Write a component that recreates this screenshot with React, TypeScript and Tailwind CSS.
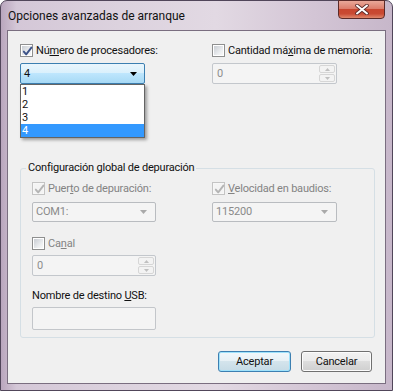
import React from "react";

function Check({ checked, disabled }: { checked?: boolean; disabled?: boolean }) {
  return (
    <span
      className={
        disabled
          ? "relative w-[13px] h-[13px] border border-[#c4c4c4] bg-[#f7f7f7] flex items-center justify-center shrink-0"
          : "relative w-[13px] h-[13px] border border-[#8e8f8f] bg-white flex items-center justify-center shrink-0"
      }
    >
      <span
        className={
          disabled
            ? "w-[9px] h-[9px] bg-[#f4f4f4]"
            : "w-[9px] h-[9px] bg-[linear-gradient(135deg,#c9cdd3_0%,#eef0f2_70%,#f8f8f8_100%)]"
        }
      />
      {checked && (
        <svg className="absolute left-[1px] top-[1px]" width="11" height="11" viewBox="0 0 11 11">
          <path
            d="M1.8 5.6 L4.2 8.4 L9.4 1.6"
            fill="none"
            stroke={disabled ? "#b4b4b4" : "#3c5288"}
            strokeWidth="1.9"
            strokeLinecap="round"
            strokeLinejoin="round"
          />
        </svg>
      )}
    </span>
  );
}

function Arrow({ color }: { color: string }) {
  return (
    <svg width="8" height="4" viewBox="0 0 8 4">
      <path d="M0 0 H7 L3.5 4 Z" fill={color} />
    </svg>
  );
}

function Spin({ value }: { value: string }) {
  return (
    <div className="h-[21px] border border-[#c3c7cc] rounded-[2px] bg-[#f4f4f4] flex items-center">
      <span className="pl-[4px] text-[#8d8d8d] flex-1 leading-[16px]">{value}</span>
      <div className="flex flex-col w-[17px] h-full py-[1px] pr-[1px] gap-[1px]">
        <div className="flex-1 border border-[#d6d6d6] rounded-[2px] bg-[#f3f3f3] flex items-center justify-center">
          <svg width="5" height="3" viewBox="0 0 5 3">
            <path d="M0 3 L2.5 0 L5 3 Z" fill="#c0c0c0" />
          </svg>
        </div>
        <div className="flex-1 border border-[#d6d6d6] rounded-[2px] bg-[#f3f3f3] flex items-center justify-center">
          <svg width="5" height="3" viewBox="0 0 5 3">
            <path d="M0 0 L5 0 L2.5 3 Z" fill="#c0c0c0" />
          </svg>
        </div>
      </div>
    </div>
  );
}

function DisabledCombo({ value }: { value: string }) {
  return (
    <div className="h-[20px] border border-[#b9bcc0] rounded-[2px] bg-[#f4f4f4] flex items-center justify-between pl-[3px] pr-[7px]">
      <span className="text-[#8a8a8a] leading-[16px]">{value}</span>
      <Arrow color="#a9a9a9" />
    </div>
  );
}

export default function App() {
  return (
    <div className="w-[393px] h-[391px] font-['Roboto',sans-serif] text-[11px] tracking-[-0.2px] text-[#111] whitespace-nowrap">
      <div className="relative w-[393px] h-[391px] rounded-t-[7px] border border-[#51465a] bg-[linear-gradient(90deg,#b9a6bd_0%,#d4c7d7_4%,#dcd2de_30%,#e2d9e3_55%,#d3c5d5_80%,#c7b7ca_100%)] flex flex-col">
        {/* Title bar */}
        <div className="h-[29px] flex items-center pl-[7px] shrink-0">
          <span className="leading-[16px] text-[12px] tracking-normal text-[#111]">Opciones avanzadas de arranque</span>
        </div>
        <div className="absolute right-[7px] top-[-1px] w-[47px] h-[19px] rounded-b-[4px] border border-[#5b2a28] bg-[linear-gradient(180deg,#e9a899_0%,#dc7d6b_45%,#c8462f_50%,#c94a33_75%,#e0876c_100%)] flex items-center justify-center">
          <svg width="14" height="11" viewBox="0 0 14 11">
            <path d="M2 1.5 L12 9.5 M12 1.5 L2 9.5" stroke="#5a2a2a" strokeWidth="3.6" strokeLinecap="round" />
            <path d="M2 1.5 L12 9.5 M12 1.5 L2 9.5" stroke="#ffffff" strokeWidth="2" strokeLinecap="round" />
          </svg>
        </div>

        {/* Client area */}
        <div className="ml-[6px] w-[379px] h-[354px] border border-[#7a6e80] bg-[#f0f0f0] flex flex-col">
          {/* Top section */}
          <div className="flex pl-[12px] pt-[11px]">
            <div className="relative w-[125px] flex flex-col">
              <div className="h-[17px] flex items-center gap-[3px]">
                <Check checked />
                <span className="leading-[16px]">
                  Nú<u>m</u>ero de procesadores:
                </span>
              </div>
              <div className="mt-[4px] h-[21px] border border-[#3c7fb1] rounded-[2px] bg-[linear-gradient(180deg,#eaf6fd_0%,#d9f0fc_50%,#bee6fd_50%,#a7d9f5_100%)] flex items-center justify-between pl-[3px] pr-[6px]">
                <span className="leading-[16px]">4</span>
                <Arrow color="#000000" />
              </div>
              <div className="absolute left-0 top-[42px] w-[125px] border border-[#646464] bg-white shadow-[2px_2px_3px_rgba(0,0,0,0.35)] flex flex-col z-10">
                <div className="h-[13px] leading-[13px] pl-[1px]">1</div>
                <div className="h-[13px] leading-[13px] pl-[1px]">2</div>
                <div className="h-[13px] leading-[13px] pl-[1px]">3</div>
                <div className="h-[13px] leading-[13px] pl-[1px] bg-[#3399ff] text-white">4</div>
              </div>
            </div>
            <div className="ml-[67px] w-[125px] flex flex-col">
              <div className="h-[17px] flex items-center gap-[3px]">
                <Check />
                <span className="leading-[16px]">
                  Cantidad má<u>x</u>ima de memoria:
                </span>
              </div>
              <div className="mt-[4px]">
                <Spin value="0" />
              </div>
            </div>
          </div>

          {/* Group box */}
          <fieldset className="ml-[12px] mt-[76px] w-[355px] border border-[#d5dfe5] rounded-[3px] pb-[7px]">
            <legend className="ml-[5px] px-[2px] leading-[16px]">Configuración global de depuración</legend>
            <div className="flex pt-[4px] pl-[11px]">
              <div className="w-[124px] flex flex-col">
                <div className="h-[17px] flex items-center gap-[3px]">
                  <Check checked disabled />
                  <span className="leading-[16px] text-[#838383]">
                    Puer<u>t</u>o de depuración:
                  </span>
                </div>
                <div className="mt-[5px]">
                  <DisabledCombo value="COM1:" />
                </div>
                <div className="mt-[13px] h-[17px] flex items-center gap-[3px]">
                  <Check />
                  <span className="leading-[16px] text-[#838383]">
                    Ca<u>n</u>al
                  </span>
                </div>
                <div className="mt-[3px]">
                  <Spin value="0" />
                </div>
                <div className="mt-[12px] h-[16px] leading-[16px]">
                  Nombre de destino <u>U</u>SB:
                </div>
                <div className="mt-[3px] h-[23px] border border-[#c3c6ca] rounded-[2px] bg-[#f4f4f4]" />
              </div>
              <div className="ml-[56px] w-[125px] flex flex-col">
                <div className="h-[17px] flex items-center gap-[3px]">
                  <Check checked disabled />
                  <span className="leading-[16px] text-[#838383]">
                    <u>V</u>elocidad en baudios:
                  </span>
                </div>
                <div className="mt-[5px]">
                  <DisabledCombo value="115200" />
                </div>
              </div>
            </div>
          </fieldset>

          {/* Buttons */}
          <div className="mt-[13px] flex justify-end pr-[13px] gap-[10px]">
            <button className="w-[73px] h-[21px] rounded-[3px] border border-[#3c7fb1] shadow-[inset_0_0_0_1px_#9fe2fb] bg-[linear-gradient(180deg,#f2f8fb_0%,#e6f0f5_50%,#d4e4ec_50%,#c6dbe6_100%)] flex items-center justify-center leading-[16px]">
              Aceptar
            </button>
            <button className="w-[71px] h-[21px] rounded-[3px] border border-[#707070] shadow-[inset_0_0_0_1px_#fcfcfc] bg-[linear-gradient(180deg,#f2f2f2_0%,#ebebeb_50%,#dddddd_50%,#cfcfcf_100%)] flex items-center justify-center leading-[16px]">
              Cancelar
            </button>
          </div>
        </div>
      </div>
    </div>
  );
}
